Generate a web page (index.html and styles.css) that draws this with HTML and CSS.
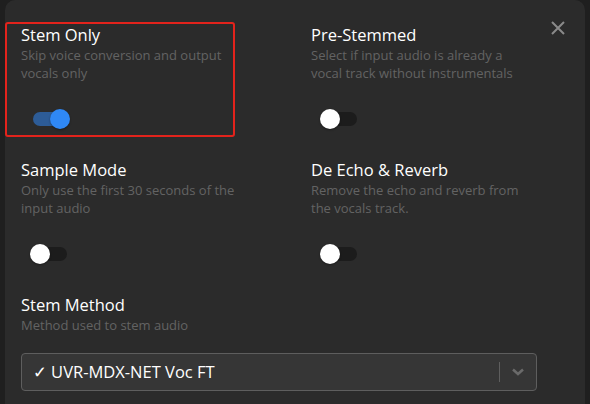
FILE: index.html
```html
<!DOCTYPE html>
<html lang="en">
<head>
<meta charset="utf-8">
<link rel="stylesheet" href="styles.css">
</head>
<body>
<div class="panel">
  <button class="close" aria-label="Close">
    <svg width="16" height="16" viewBox="0 0 16 16"><path d="M2 2 L14 14 M14 2 L2 14" stroke="#8a8a8a" stroke-width="2" fill="none"/></svg>
  </button>
  <div class="grid">
    <div class="cell highlighted">
      <div class="title">Stem Only</div>
      <div class="desc">Skip voice conversion and output vocals only</div>
      <span class="switch on"><span class="track"></span><span class="thumb"></span></span>
    </div>
    <div class="cell">
      <div class="title">Pre-Stemmed</div>
      <div class="desc">Select if input audio is already a vocal track without instrumentals</div>
      <span class="switch"><span class="track"></span><span class="thumb"></span></span>
    </div>
    <div class="cell">
      <div class="title">Sample Mode</div>
      <div class="desc">Only use the first 30 seconds of the input audio</div>
      <span class="switch"><span class="track"></span><span class="thumb"></span></span>
    </div>
    <div class="cell">
      <div class="title">De Echo &amp; Reverb</div>
      <div class="desc">Remove the echo and reverb from the vocals track.</div>
      <span class="switch"><span class="track"></span><span class="thumb"></span></span>
    </div>
    <div class="cell wide">
      <div class="title">Stem Method</div>
      <div class="desc short">Method used to stem audio</div>
      <div class="select">
        <span class="value">✓ UVR-MDX-NET Voc FT</span>
        <span class="sep"></span>
        <span class="chev">
          <svg width="14" height="10" viewBox="0 0 14 10"><path d="M2 2.5 L7 7 L12 2.5" stroke="#6a6a6a" stroke-width="2.5" fill="none"/></svg>
        </span>
      </div>
    </div>
  </div>
</div>
</body>
</html>
```
FILE: styles.css
```css
html, body {
  margin: 0;
  height: 100%;
  background: #1f1f1f;
  overflow: hidden;
}
.panel {
  position: relative;
  margin: 0 5px;
  height: 100%;
  background: #2b2b2b;
  border-radius: 10px 10px 0 0;
  padding: 23px 16px 0 16px;
  box-sizing: border-box;
  font-family: "Open Sans", "DejaVu Sans", sans-serif;
}
.close {
  position: absolute;
  top: 20px;
  right: 19px;
  width: 16px;
  height: 16px;
  padding: 0;
  border: 0;
  background: none;
  display: flex;
}
.grid {
  display: grid;
  grid-template-columns: 290px 1fr;
  row-gap: 20px;
}
.cell {
  position: relative;
  display: flex;
  flex-direction: column;
  align-items: flex-start;
}
.cell.wide {
  grid-column: 1 / span 2;
  align-items: stretch;
}
.highlighted::after {
  content: "";
  position: absolute;
  left: -16px;
  top: -1px;
  width: 230px;
  height: 115px;
  box-sizing: border-box;
  border: 2px solid #e3231c;
  border-radius: 3px;
  pointer-events: none;
}
.title {
  color: #ffffff;
  font-size: 16.5px;
  font-weight: 500;
  line-height: 24px;
}
.desc {
  color: #636363;
  font-size: 13px;
  line-height: 17.5px;
  width: 216px;
  margin-bottom: 18px;
}
.desc.short {
  width: auto;
}
.switch {
  position: relative;
  display: block;
  width: 58px;
  height: 38px;
}
.track {
  position: absolute;
  left: 12px;
  top: 12px;
  width: 34px;
  height: 14px;
  border-radius: 7px;
  background: #1c1c1c;
}
.thumb {
  position: absolute;
  left: 9px;
  top: 9px;
  width: 20px;
  height: 20px;
  border-radius: 50%;
  background: #ffffff;
  box-shadow: 0 1px 2px rgba(0,0,0,0.35);
}
.switch.on .track {
  background: #2d5c97;
}
.switch.on .thumb {
  left: 29px;
  background: #2f88f5;
}
.select {
  width: 516px;
  height: 38px;
  box-sizing: border-box;
  background: #363636;
  border: 1px solid #5e5e5e;
  border-radius: 4px;
  display: flex;
  align-items: center;
  padding-left: 11px;
}
.value {
  flex: 1;
  color: #ffffff;
  font-size: 16.5px;
  font-weight: 500;
}
.sep {
  width: 1px;
  height: 20px;
  background: #5e5e5e;
}
.chev {
  width: 36px;
  display: flex;
  justify-content: center;
  align-items: center;
}
```
